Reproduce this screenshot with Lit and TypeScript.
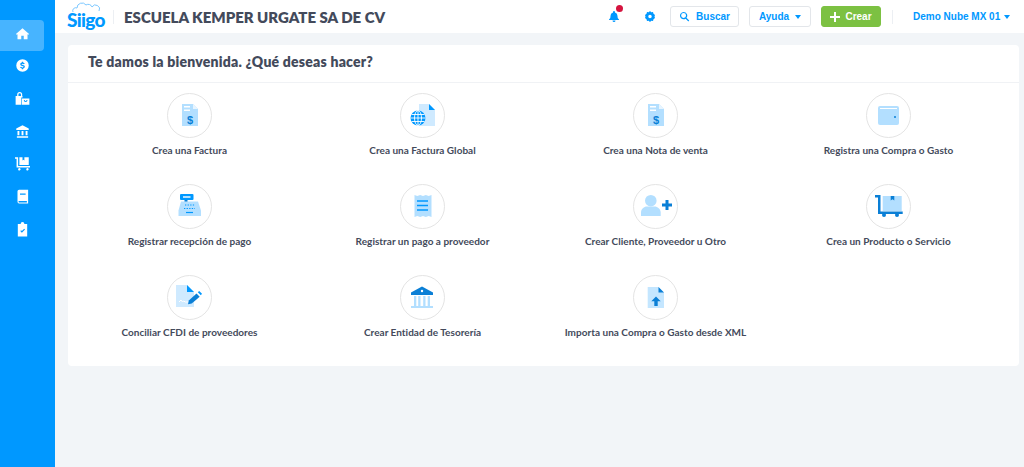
import { LitElement, css, html, svg } from "lit";
import { customElement } from "lit/decorators.js";

const LIGHT = "#b3dfff";
const MID = "#0098ff";
const DARK = "#0a7fd6";

const navIcons = [
  svg`<path d="M12 3.500 1.500 12.600l1.300 1.500L4 13.100V21h6v-5.500h4V21h6v-7.900l1.200 1 1.300-1.500Z"/>`,
  svg`<path fill-rule="evenodd" d="M12 2a10 10 0 1 0 0 20 10 10 0 0 0 0-20Zm1 4v1.300c1.200.2 2.200.9 2.600 2l-1.800.7c-.2-.6-.8-1-1.700-1-.9 0-1.500.4-1.500 1 0 .6.5.9 1.900 1.200 2 .5 3.200 1.100 3.200 2.900 0 1.400-1 2.300-2.700 2.600V18h-2v-1.300c-1.400-.2-2.500-1-2.900-2.300l1.900-.6c.2.8 1 1.300 1.900 1.300 1 0 1.700-.4 1.700-1.100 0-.6-.5-.9-2-1.300-1.800-.4-3.100-1-3.100-2.800 0-1.300 1-2.300 2.500-2.600V6Z"/>`,
  svg`<path fill-rule="evenodd" d="M3.500 8V5.500a4 4 0 0 1 8 0V8H12v2.500h-2V22H1V8Zm2 0h4V5.500a2 2 0 0 0-4 0ZM11 12h12v10H11Zm3 2.500a3 3 0 0 0 6 0h-1.500a1.500 1.500 0 0 1-3 0Z"/>`,
  svg`<path d="M12 2 2 7v2.500h20V7ZM4 11h3v7H4Zm6.500 0h3v7h-3ZM17 11h3v7h-3ZM3 19.500h18V22H3Z"/>`,
  svg`<path d="M0 2h5v14h19v2.500H2.500V4.500H0Zm7 0h5v5l1.500-1 1.500 1V2h7v12.500H7ZM6 19.500a2 2 0 1 1 0 3.500 2 2 0 0 1 0-3.500Zm13 0a2 2 0 1 1 0 3.500 2 2 0 0 1 0-3.500Z"/>`,
  svg`<path fill-rule="evenodd" d="M6.500 1H21v22H6.500A2.500 2.500 0 0 1 4 20.500v-17A2.500 2.500 0 0 1 6.500 1ZM8 7v2h9V7Zm-1.500 12a1.300 1.300 0 0 0 0 2.500H19V19Z"/>`,
  svg`<path fill-rule="evenodd" d="M9 3a3 3 0 0 1 6 0h4.500v20h-15V3Zm-.5 11.500 2.500 2.500 5-5-1.300-1.300L11 14.400l-1.200-1.200Z"/>`,
];

const invoiceIcon = svg`<path fill="${LIGHT}" d="M15 11h11l5 5v17H15Z"/><path fill="#e8f5ff" d="M26 11v5h5Z"/><path fill="#fff" d="M17 13h6v1.500h-6Zm0 3.500h6V18h-6Z"/><text x="23" y="30.500" text-anchor="middle" font-size="11" font-weight="700" fill="${DARK}">$</text>`;

const actions = [
  { label: "Crea una Factura", icon: invoiceIcon },
  {
    label: "Crea una Factura Global",
    icon: svg`<path fill="#cfeaff" d="M19 11h10l6 6v16H19Z"/><path fill="${MID}" d="M29 11l6 6h-6Z"/><circle cx="18" cy="25" r="7.500" fill="${MID}"/><path fill="none" stroke="#fff" stroke-width=".9" d="M10.500 25h15M11.500 21.500h13M11.500 28.500h13M18 17.500v15"/><ellipse cx="18" cy="25" rx="3.500" ry="7.500" fill="none" stroke="#fff" stroke-width=".9"/>`,
  },
  { label: "Crea una Nota de venta", icon: invoiceIcon },
  {
    label: "Registra una Compra o Gasto",
    icon: svg`<rect x="12" y="13" width="21" height="19" rx="2" fill="${LIGHT}"/><path fill="none" stroke="#fff" d="M14 15.500h17"/><circle cx="29" cy="24" r="1" fill="${DARK}"/>`,
  },
  {
    label: "Registrar recepción de pago",
    icon: svg`<rect x="13" y="10" width="13.500" height="6" rx="1" fill="${MID}"/><path fill="#fff" d="M16 12.300h7.500v1.400H16Z"/><path fill="${DARK}" d="M17.500 16h3v2h-3Z"/><path fill="${LIGHT}" d="M14 17.500h17l3 9V32H11.500v-5.500Z"/><path fill="none" stroke="${MID}" stroke-width="1.200" stroke-dasharray="1.300 1.300" d="M18 21h10M17 24.500h11"/><path stroke="${MID}" stroke-width="1.200" d="M19 28.500h7"/>`,
  },
  {
    label: "Registrar un pago a proveedor",
    icon: svg`<path fill="${LIGHT}" d="M14.500 11l2.800 1 2.900-1 2.800 1 2.800-1 2.900 1 2.800-1v22l-2.800-1-2.900 1-2.800-1-2.800 1-2.900-1-2.800 1Z"/><path stroke="${MID}" stroke-width="1.300" d="M17 17h11M17 21.500h11M17 26h11"/>`,
  },
  {
    label: "Crear Cliente, Proveedor u Otro",
    icon: svg`<circle cx="17.800" cy="16.700" r="5.800" fill="${LIGHT}"/><path fill="${LIGHT}" d="M8 32v-3.500c0-3.500 3-6 6-6h7.500c3 0 6.200 2.500 6.200 6V32Z"/><path fill="${DARK}" d="M32.500 16h3v3.500H39v3h-3.500V26h-3v-3.500H29v-3h3.500Z"/>`,
  },
  {
    label: "Crea un Producto o Servicio",
    icon: svg`<rect x="16.700" y="12" width="19" height="15" fill="${LIGHT}"/><path fill="${DARK}" d="M24.700 12h3.600v4.500l-1.800-1.200-1.800 1.200ZM9 11h5.500v16.500H36.700V30H12V13.500H9Z"/><circle cx="18" cy="31" r="2" fill="${DARK}"/><circle cx="31" cy="31" r="2" fill="${DARK}"/>`,
  },
  {
    label: "Conciliar CFDI de proveedores",
    icon: svg`<path fill="#cfeaff" d="M9 10h11l7 7v15H9Z"/><path fill="${MID}" d="M20 10l7 7h-7Z"/><path fill="none" stroke="#fff" d="M12 27l2-2 1.500 2 1-1 2 1h3"/><path fill="${DARK}" d="M29.500 18.500l3.200 3.200-8 6.800-3.700 .8.800-3.800Z"/><path fill="${MID}" d="M30.800 17.200 32.200 16l2.800 2.800-1.200 1.500Z"/>`,
  },
  {
    label: "Crear Entidad de Tesorería",
    icon: svg`<path fill="${DARK}" d="M22 11.500 33 17.500V20H11v-2.500Z"/><circle cx="22" cy="16" r="1.200" fill="#fff"/><path fill="${LIGHT}" d="M14 21h2.300v10H14Zm4.200 0h2.300v10h-2.300Zm5 0h2.300v10h-2.300Zm4.500 0H30v10h-2.300ZM11 31h22v2H11Z"/>`,
  },
  {
    label: "Importa una Compra o Gasto desde XML",
    icon: svg`<path fill="#c4e6ff" d="M14.700 12h10.800l5.500 5.500V33H14.700Z"/><path fill="${DARK}" d="M25.500 12l5.500 5.500h-5.500ZM23 21.500l4.700 4.700h-3v4.800h-3.400v-4.800h-3Z"/>`,
  },
];

@customElement("app-root")
export class AppRoot extends LitElement {
  static styles = css`
    :host {
      display: grid;
      grid-template-columns: 54.500px 1fr;
      height: 467px;
      overflow: hidden;
      font-family: Lato, "Open Sans", sans-serif;
      color: #434a5b;
      background: #f2f5f8;
    }

    .sidebar {
      display: flex;
      flex-direction: column;
      padding-top: 20px;
      background: #0098ff;
    }

    .nav-item {
      display: flex;
      align-items: center;
      justify-content: center;
      box-sizing: border-box;
      width: 44px;
      height: 32.700px;
    }

    .nav-item.active {
      height: 31px;
      margin-bottom: -1.500px;
      padding-bottom: 5px;
      background: rgba(255, 255, 255, 0.28);
      border-radius: 0 4px 4px 0;
    }

    .nav-item svg {
      width: 15px;
      height: 15px;
      fill: #fff;
    }

    .topbar {
      display: flex;
      align-items: center;
      height: 33px;
      padding-left: 12.500px;
      background: #fff;
    }

    .logo {
      position: relative;
      width: 35px;
      height: 29px;
      color: #0098ff;
    }

    .logo svg {
      position: absolute;
      top: 0;
      left: 4px;
      width: 30px;
      height: 12px;
    }

    .logo span {
      position: absolute;
      top: 7px;
      left: 0;
      font-size: 19px;
      line-height: 22px;
      font-weight: 900;
      letter-spacing: -0.7px;
    }

    .divider {
      width: 1px;
      height: 14px;
      background: #eceff3;
    }

    .logo + .divider {
      margin-left: 11px;
    }

    .company {
      margin-left: 10px;
      font-size: 15px;
      font-weight: 800;
      white-space: nowrap;
    }

    .tools {
      display: flex;
      align-items: center;
      margin-left: auto;
      font-family: "Liberation Sans", Arial, sans-serif;
      font-size: 10px;
      font-weight: 700;
      color: #0098ff;
    }

    .bell {
      position: relative;
      display: flex;
      margin-right: 26px;
    }

    .bell i {
      position: absolute;
      top: -6px;
      left: 7px;
      width: 7px;
      height: 7px;
      border-radius: 50%;
      background: #d5143f;
    }

    .tools svg {
      display: block;
      fill: currentColor;
    }

    .btn {
      display: flex;
      align-items: center;
      justify-content: center;
      gap: 6px;
      box-sizing: border-box;
      height: 21px;
      border: 1px solid #e3e6ea;
      border-radius: 3px;
      background: #fff;
    }

    .gear {
      margin-right: 15px;
    }

    .search {
      width: 69px;
      margin-right: 10px;
    }

    .help {
      width: 62px;
      margin-right: 10px;
    }

    .create {
      width: 60px;
      margin-right: 11px;
      gap: 5px;
      border-color: #7cc142;
      background: #7cc142;
      color: #fff;
    }

    .caret {
      width: 0;
      height: 0;
      border: 3.500px solid transparent;
      border-top: 4px solid currentColor;
      border-bottom: 0;
    }

    .user {
      display: flex;
      align-items: center;
      justify-content: space-between;
      box-sizing: border-box;
      width: 97px;
      margin: 0 14px 0 20px;
      white-space: nowrap;
    }

    .content {
      padding: 12px 5px 0 13.500px;
    }

    .card {
      height: 321px;
      box-sizing: border-box;
      border-radius: 4px;
      background: #fff;
    }

    .card-title {
      height: 38px;
      box-sizing: border-box;
      padding-left: 20px;
      border-bottom: 1px solid #f0f2f5;
      font-size: 14px;
      line-height: 33px;
      font-weight: 800;
      letter-spacing: 0.22px;
    }

    .grid {
      display: grid;
      grid-template-columns: repeat(4, 233px);
      grid-auto-rows: 91px;
      padding: 10px 0 0 5px;
    }

    .action {
      display: flex;
      flex-direction: column;
      align-items: center;
      gap: 5px;
    }

    .circle {
      width: 45px;
      height: 45px;
      box-sizing: border-box;
      border: 1px solid #e4e4e4;
      border-radius: 50%;
    }

    .circle svg {
      display: block;
      margin: -1px;
      width: 45px;
      height: 45px;
      font-family: "Liberation Sans", sans-serif;
    }

    .label {
      font-size: 10px;
      line-height: 14px;
      font-weight: 700;
      letter-spacing: 0.02px;
      white-space: nowrap;
    }
  `;

  render() {
    return html`
      <nav class="sidebar">
        ${navIcons.map(
          (icon, i) => html`
            <div class="nav-item ${i === 0 ? "active" : ""}">
              <svg viewBox="0 0 24 24">${icon}</svg>
            </div>
          `
        )}
      </nav>
      <div>
        <header class="topbar">
          <div class="logo">
            <svg viewBox="0 0 30 12">
              <path
                fill="none"
                stroke="#7cc8ff"
                d="M2 10a3 3 0 0 1 4-4 5 5 0 0 1 9-3 4 4 0 0 1 6 2 3 3 0 0 1 7 4"
              />
            </svg>
            <span>Siigo</span>
          </div>
          <div class="divider"></div>
          <div class="company">ESCUELA KEMPER URGATE SA DE CV</div>
          <div class="tools">
            <div class="bell">
              <svg width="10" height="11" viewBox="0 0 20 22">
                <path
                  d="M10 0a2 2 0 0 1 2 2v1a7 7 0 0 1 5 7c0 4 1 5 3 7v1H0v-1c2-2 3-3 3-7a7 7 0 0 1 5-7V2a2 2 0 0 1 2-2ZM7 19h6a3 3 0 0 1-6 0Z"
                />
              </svg>
              <i></i>
            </div>
            <svg class="gear" width="10" height="11" viewBox="0 0 20 22">
              <path
                fill-rule="evenodd"
                d="M10 0l2.500 2.500 3.500-.5 1 3.500L20 8l-1 3 1 3-3 2.500-1 3.500-3.500-.5L10 22l-2.500-2.500L4 20l-1-3.500L0 14l1-3-1-3 3-2.500L4 2l3.500.5ZM10 7.500a3.500 3.500 0 1 0 0 7 3.500 3.500 0 0 0 0-7Z"
              />
            </svg>
            <div class="btn search">
              <svg width="11" height="11" viewBox="0 0 24 24">
                <path
                  d="M10 2a8 8 0 0 1 6.300 12.900l6 6-1.900 1.900-6-6A8 8 0 1 1 10 2Zm0 2.600a5.400 5.400 0 1 0 0 10.800 5.400 5.400 0 0 0 0-10.800Z"
                />
              </svg>
              Buscar
            </div>
            <div class="btn help">Ayuda <span class="caret"></span></div>
            <div class="btn create">
              <svg width="10" height="10" viewBox="0 0 10 10">
                <path d="M4 0h2v4h4v2H6v4H4V6H0V4h4Z" />
              </svg>
              Crear
            </div>
            <div class="divider"></div>
            <div class="user">Demo Nube MX 01 <span class="caret"></span></div>
          </div>
        </header>
        <main class="content">
          <section class="card">
            <div class="card-title">Te damos la bienvenida. ¿Qué deseas hacer?</div>
            <div class="grid">
              ${actions.map(
                (a) => html`
                  <div class="action">
                    <div class="circle"><svg viewBox="0 0 45 45">${a.icon}</svg></div>
                    <div class="label">${a.label}</div>
                  </div>
                `
              )}
            </div>
          </section>
        </main>
      </div>
    `;
  }
}
